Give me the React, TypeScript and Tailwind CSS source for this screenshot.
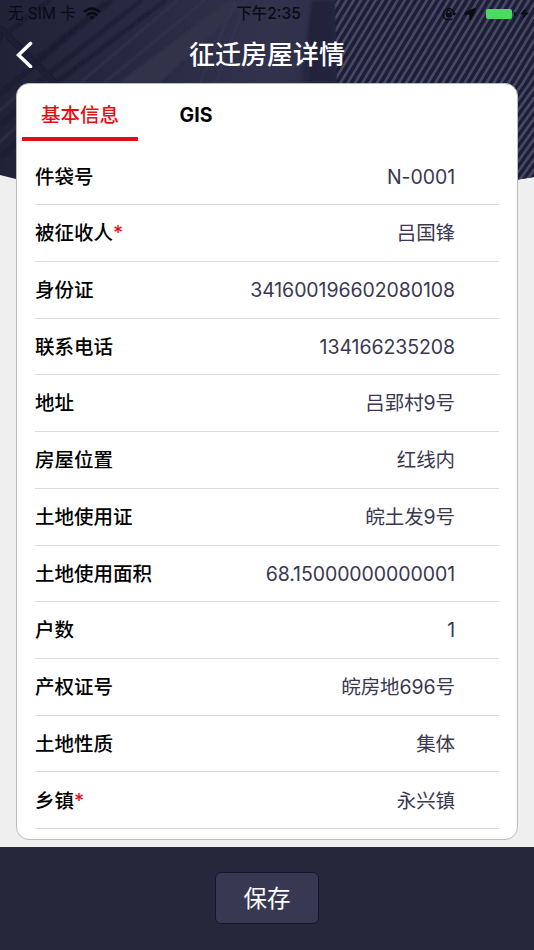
import { FaLocationArrow } from 'react-icons/fa';

const rows = [
  { label: '件袋号', value: 'N-0001' },
  { label: '被征收人', value: '吕国锋', required: true },
  { label: '身份证', value: '341600196602080108' },
  { label: '联系电话', value: '134166235208' },
  { label: '地址', value: '吕郢村9号' },
  { label: '房屋位置', value: '红线内' },
  { label: '土地使用证', value: '皖土发9号' },
  { label: '土地使用面积', value: '68.15000000000001' },
  { label: '户数', value: '1' },
  { label: '产权证号', value: '皖房地696号' },
  { label: '土地性质', value: '集体' },
  { label: '乡镇', value: '永兴镇', required: true },
];

const stripes = Array.from({ length: 44 }, (_, i) => 332 + i * 7.3);

function Backdrop() {
  return (
    <svg className="absolute inset-x-0 top-0 h-[184px] w-full" viewBox="0 0 534 184" fill="none">
      <defs>
        <linearGradient id="base" x1="0" y1="0" x2="1" y2="0">
          <stop offset="0" stopColor="#212138" />
          <stop offset="0.3" stopColor="#2a2a43" />
          <stop offset="0.5" stopColor="#32324d" />
          <stop offset="0.62" stopColor="#2e2f4a" />
        </linearGradient>
        <linearGradient id="edge" x1="0" y1="0" x2="1" y2="0">
          <stop offset="0" stopColor="#2a2b45" />
          <stop offset="0.4" stopColor="#20213a" />
          <stop offset="1" stopColor="#25263f" />
        </linearGradient>
        <clipPath id="curve">
          <path d="M0 0H534V177L518 179.500Q267 205 16 179L0 175Z" />
        </clipPath>
        <clipPath id="facade">
          <path d="M335 0H534V184H339Z" />
        </clipPath>
        <filter id="soft">
          <feGaussianBlur stdDeviation="0.9" />
        </filter>
      </defs>
      <g clipPath="url(#curve)">
        <rect width="534" height="184" fill="url(#base)" />
        <g filter="url(#soft)">
          <path d="M118 83L228 0H250L160 83Z" fill="#303149" />
          <g stroke="#1a1a31" strokeWidth="2.500">
            <path d="M-5 42L50 0M0 94L112 0M28 66L105 3M37 83L142 0M56 83L166 0M-5 130L20 108M-5 162L20 140" />
            <path d="M0 28L55 83" strokeWidth="4" />
          </g>
          <path d="M80 83L178 0M104 83L205 0M-5 115L20 93M-5 146L20 124" stroke="#33344c" strokeWidth="2" />
          <path d="M200 83L236 0M216 83L246 0" stroke="#3a3b56" />
          <path d="M300 83L312 0H336L339 83Z" fill="url(#edge)" />
        </g>
        <g clipPath="url(#facade)">
          <path d="M334 0H534V184H334Z" fill="#1c1d36" />
          <g stroke="#454862" strokeWidth="2.700">
            {stripes.map((x) => (
              <path key={x} d={`M${x + 6} -10L${x - 50} 83L${x - 122} 184`} />
            ))}
          </g>
        </g>
      </g>
    </svg>
  );
}

function WifiIcon() {
  return (
    <svg className="ml-[7px] h-[14px] w-[18px]" viewBox="0 0 18 14" fill="none" stroke="#0b0b14">
      <path d="M1 5Q9-2 17 5" strokeWidth="2.500" />
      <path d="M3.8 8.200Q9 3.800 14.200 8.200" strokeWidth="2.500" />
      <path d="M6.200 10.200Q9 7.800 11.800 10.200L9 13Z" fill="#0b0b14" stroke="none" />
    </svg>
  );
}

function LockIcon() {
  return (
    <svg className="h-[14px] w-[15px]" viewBox="0 0 15 14" fill="none" stroke="#0b0b14">
      <path d="M10.500 11.600A5.700 5.700 0 1 1 12.300 6" strokeWidth="1.200" />
      <path d="M10.100 6H14.700L12.400 8.800Z" fill="#0b0b14" stroke="none" />
      <rect x="4" y="6" width="5.400" height="4" rx="0.600" fill="#0b0b14" stroke="none" />
      <path d="M5.100 6.300V5A1.600 1.600 0 0 1 8.300 5V6.300" strokeWidth="1.100" />
    </svg>
  );
}

function StatusBar() {
  return (
    <div className="grid h-[27px] grid-cols-3 items-center pr-[5px] pl-2 text-[15.5px] text-[#0b0b14]">
      <div className="flex items-center whitespace-nowrap">
        <span>无 SIM 卡</span>
        <WifiIcon />
      </div>
      <span className="text-center font-medium whitespace-nowrap">下午2:35</span>
      <div className="flex items-center justify-end">
        <LockIcon />
        <FaLocationArrow className="ml-[7px] size-3" />
        <div className="ml-[10px] h-[10px] w-[26px] rounded-[2px] bg-[#4cd964]" />
        <div className="ml-[2px] h-1 w-[2px] rounded-r bg-[#0b0b14]" />
        <svg className="ml-1 h-[11px] w-[9px]" viewBox="0 0 10 12" fill="#0b0b14">
          <path d="M6.500 0L0 6.800H4L2.800 12L10 4.800H5.800Z" />
        </svg>
      </div>
    </div>
  );
}

export default function App() {
  return (
    <div className="relative flex h-[950px] w-[534px] flex-col overflow-hidden bg-[#efeff0] font-[Inter,'Noto_Sans_CJK_SC',sans-serif]">
      <Backdrop />

      <header className="relative h-[83px] shrink-0">
        <StatusBar />
        <div className="grid h-[54px] grid-cols-[48px_1fr_48px] items-center">
          <button aria-label="返回" className="pl-4">
            <svg className="h-7 w-[18px]" viewBox="0 0 18 28" fill="none">
              <path d="M14.500 3.500L2.500 15L14.500 26.500" stroke="white" strokeWidth="3.600" strokeLinecap="round" />
            </svg>
          </button>
          <h1 className="text-center text-[26px] font-medium text-white">征迁房屋详情</h1>
        </div>
      </header>

      <main className="relative mx-4 h-[757px] shrink-0 overflow-hidden rounded-[13px] border border-[#bcbdc2] bg-white">
        <div className="flex h-[57px] pl-[5px] text-[19.5px] leading-none">
          <button className="flex w-[116px] items-center justify-center border-b-4 border-[#e20f12] pt-[11px] font-medium text-[#e20f12]">基本信息</button>
          <button className="flex w-[116px] items-center justify-center pt-[7px] font-bold text-black">GIS</button>
        </div>
        <dl className="mt-[7.5px] ml-[18px] w-[464px]">
          {rows.map((row) => (
            <div key={row.label} className="flex h-[56.73px] items-center justify-between border-b border-[#dcdcde] pt-[2px] pr-11 text-[19.5px] leading-none">
              <dt className="font-medium text-black">
                {row.label}
                {row.required && <span className="text-[#e20f12]">*</span>}
              </dt>
              <dd className="tracking-[-0.08px] text-[#3a3850]">{row.value}</dd>
            </div>
          ))}
        </dl>
      </main>

      <footer className="relative mt-[7px] flex flex-1 justify-center bg-[#25273a] pt-[25px]">
        <button className="h-[52px] w-[104px] rounded-md border border-[#15162b] bg-[#393852] pt-[2px] text-[23.5px] text-white">保存</button>
      </footer>
    </div>
  );
}
